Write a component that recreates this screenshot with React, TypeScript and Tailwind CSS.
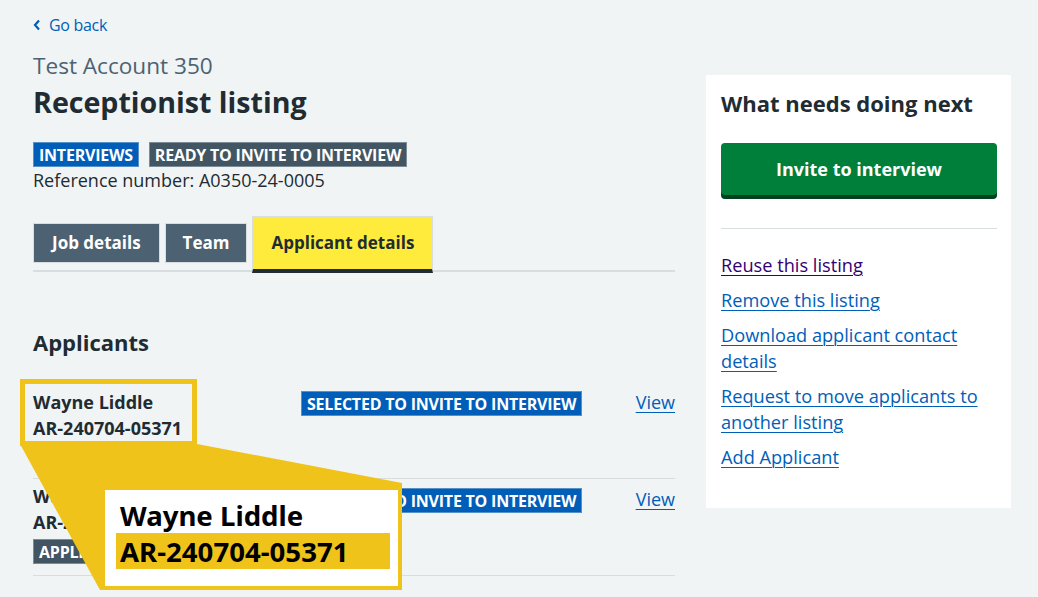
import React from "react";

const Tag = ({ children, tone }: { children: React.ReactNode; tone: "blue" | "grey" }) => (
  <span
    className={
      "inline-block px-[5px] h-[25px] leading-[24px] text-[16px] font-bold uppercase tracking-[-0.22px] text-white border border-[#d8dde0]/40 " +
      (tone === "blue" ? "bg-[#005eb8]" : "bg-[#425563]")
    }
  >
    {children}
  </span>
);

const Link = ({ children, visited }: { children: React.ReactNode; visited?: boolean }) => (
  <a
    href="#"
    className={
      "underline underline-offset-[3px] decoration-1 " + (visited ? "text-[#330072]" : "text-[#005eb8]")
    }
  >
    {children}
  </a>
);

export default function App() {
  return (
    <div className="relative w-[1038px] h-[597px] overflow-hidden bg-[#f0f4f5] text-[#212b32] font-['Open_Sans',sans-serif]">
      <div className="flex gap-[31px] pl-[33px]">
        <main className="w-[642px]">
          <a href="#" className="mt-[13px] flex items-center gap-[8px] h-[24px] text-[16px] text-[#005eb8]">
            <svg width="8" height="12" viewBox="0 0 8 12" className="shrink-0">
              <polyline points="6,1.5 2,6 6,10.5" fill="none" stroke="#005eb8" strokeWidth="2.2" />
            </svg>
            <span className="leading-[24px] tracking-[-0.3px]">Go back</span>
          </a>
          <div className="mt-[14px] text-[22.6px] leading-[30px] text-[#4c6272]">Test Account 350</div>
          <h1 className="mt-[3px] text-[28.6px] leading-[36px] font-bold">Receptionist listing</h1>
          <div className="mt-[22px] flex gap-[10px]">
            <Tag tone="blue">Interviews</Tag>
            <Tag tone="grey">Ready to invite to interview</Tag>
          </div>
          <div className="text-[18px] leading-[26px]">Reference number: A0350-24-0005</div>

          <div className="mt-[23px] flex items-start gap-[5px] border-b-2 border-[#d8dde0]">
            <div className="mt-[7px] h-[40px] px-[18px] flex items-center bg-[#4c6272] border border-[#d8dde0] text-white font-bold text-[17px]">
              Job details
            </div>
            <div className="mt-[7px] h-[40px] px-[17px] flex items-center bg-[#4c6272] border border-[#d8dde0] text-white font-bold text-[17px]">
              Team
            </div>
            <div className="h-[57px] -mb-[3px] px-[18px] pb-[1px] flex items-center bg-[#ffeb3b] border border-[#d8dde0] border-b-[4px] border-b-[#212b32] font-bold text-[17px] text-[#212b32]">
              Applicant details
            </div>
          </div>

          <h2 className="mt-[55px] text-[22px] leading-[30px] font-bold">Applicants</h2>

          <div className="mt-[25px]">
            <div className="h-[97px] pt-[7px] flex border-b border-[#d8dde0]">
              <div className="w-[268px] text-[18px] leading-[26px] font-bold">
                <div>Wayne Liddle</div>
                <div>AR-240704-05371</div>
              </div>
              <div className="flex-1 pt-[2px]">
                <Tag tone="blue">Selected to invite to interview</Tag>
              </div>
              <div className="text-[18px] leading-[26px]">
                <Link>View</Link>
              </div>
            </div>
            <div className="h-[97px] pt-[4px] flex border-b border-[#d8dde0]">
              <div className="w-[268px] text-[18px] leading-[26px] font-bold">
                <div>Wayne Liddle</div>
                <div>AR-240704-05371</div>
                <div className="mt-[3px]">
                  <Tag tone="grey">Applicant withdrawn</Tag>
                </div>
              </div>
              <div className="flex-1 pt-[5px]">
                <Tag tone="blue">Selected to invite to interview</Tag>
              </div>
              <div className="pt-[3px] text-[18px] leading-[26px]">
                <Link>View</Link>
              </div>
            </div>
          </div>
        </main>

        <aside className="mt-[75px] w-[305px] h-[433px] bg-white px-[15px] pt-[13px]">
          <h2 className="text-[22px] leading-[30px] font-bold">What needs doing next</h2>
          <button className="mt-[25px] w-[276px] h-[52px] rounded-[4px] bg-[#007f3b] shadow-[0_4px_0_#00401e] text-white font-bold text-[18px]">
            Invite to interview
          </button>
          <div className="mt-[33px] h-[1px] w-[276px] bg-[#d8dde0]" />
          <ul className="mt-[23px] flex flex-col gap-[9px] text-[18.2px] leading-[26px]">
            <li><Link visited>Reuse this listing</Link></li>
            <li><Link>Remove this listing</Link></li>
            <li><Link>Download applicant contact details</Link></li>
            <li><Link>Request to move applicants to another listing</Link></li>
            <li><Link>Add Applicant</Link></li>
          </ul>
        </aside>
      </div>

      {/* callout overlay */}
      <svg className="absolute left-0 top-0 pointer-events-none" width="1038" height="597">
        <polygon points="20,444 197,444 402,483 402,590 100,590" fill="#f0c31a" />
      </svg>
      <div className="absolute left-[20px] top-[379px] w-[177px] h-[67px] border-[5px] border-[#f0c31a]" />
      <div className="absolute left-[101px] top-[486px] w-[301px] h-[104px] bg-white border-[4px] border-[#f0c31a] pl-[11px] pr-[8px] pt-[7px] font-['Noto_Sans',sans-serif] font-bold text-black text-[27.6px]">
        <div className="pl-[4px] leading-[36px]">Wayne Liddle</div>
        <div className="bg-[#f0c31a] h-[36px] leading-[36px] pl-[4px]">AR-240704-05371</div>
      </div>
    </div>
  );
}
